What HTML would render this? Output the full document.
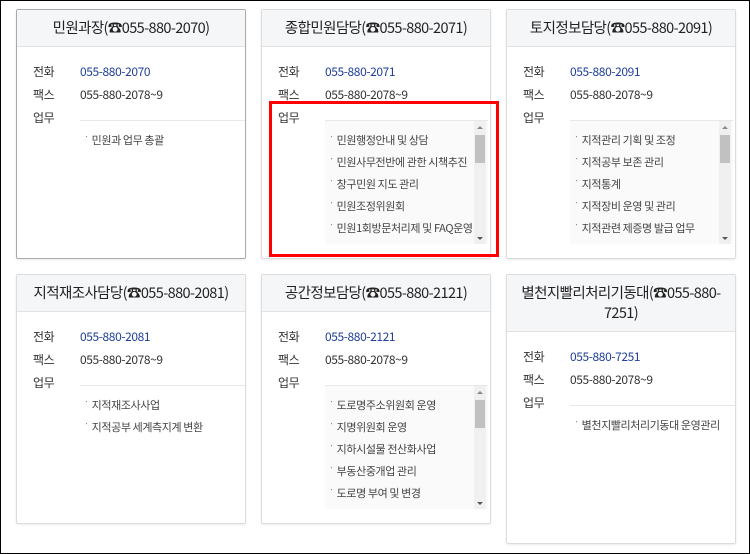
<!DOCTYPE html>
<html><head><meta charset="utf-8"><style>
*{margin:0;padding:0;box-sizing:border-box}
body{width:750px;height:554px;background:#fff;border:1px solid #000;position:relative;overflow:hidden;font-family:"Noto Sans CJK KR","Liberation Sans",sans-serif;color:#333}
.card{position:absolute;width:230px;height:250px;border:1px solid #dcdcdc;border-radius:2px;background:#fff;box-shadow:0 1px 2px rgba(0,0,0,.08)}
.card.sel{border-color:#aaa}
.hd{background:#f5f6f8;border-bottom:1px solid #e2e2e2;height:37px;display:flex;align-items:center;justify-content:center;text-align:center;font-size:14.5px;letter-spacing:-0.6px;color:#222;line-height:20px;white-space:nowrap}
.hd.two{height:57px}
.row{position:absolute;left:16px;font-size:12px;letter-spacing:-0.4px;height:23px;line-height:23px}
.row .l{display:inline-block;width:47px}
.blue{color:#1f3f99}
.list{position:absolute;left:63px;right:0;border-top:1px solid #e8e8e8;font-size:11px;letter-spacing:-0.4px;color:#444;padding-top:8px;white-space:nowrap}
.list div{height:22px;line-height:22px;padding-left:4px}
.list div:before{content:"·";font-size:9px;color:#888;margin-right:3px;vertical-align:top;position:relative;top:-3px}
.scroll{height:124px;overflow:hidden;background:#fafafa;right:2px}
.sb{position:absolute;right:2px;top:0;width:12px;height:124px;background:#f0f0f0}
.sb .t{position:absolute;left:1px;top:14px;width:10px;height:28px;background:#c1c1c1}
.sb .u,.sb .d{position:absolute;left:3px;width:0;height:0;border-left:3px solid transparent;border-right:3px solid transparent}
.sb .u{top:5px;border-bottom:3px solid #888}
.sb .d{bottom:5px;border-top:3px solid #555}
.red{position:absolute;left:268px;top:100px;width:230px;height:156px;border:3px solid #f00}
</style></head><body>

<div class="card sel" style="left:15px;top:8px">
<div class="hd">민원과장(☎055-880-2070)</div>
<div class="row" style="top:50px"><span class="l">전화</span><span class="blue">055-880-2070</span></div>
<div class="row" style="top:73px"><span class="l">팩스</span>055-880-2078~9</div>
<div class="row" style="top:96px"><span class="l">업무</span></div>
<div class="list" style="top:110px"><div>민원과 업무 총괄</div></div>
</div>

<div class="card" style="left:260px;top:8px">
<div class="hd">종합민원담당(☎055-880-2071)</div>
<div class="row" style="top:50px"><span class="l">전화</span><span class="blue">055-880-2071</span></div>
<div class="row" style="top:73px"><span class="l">팩스</span>055-880-2078~9</div>
<div class="row" style="top:96px"><span class="l">업무</span></div>
<div class="list scroll" style="top:110px"><div>민원행정안내 및 상담</div><div>민원사무전반에 관한 시책추진</div><div>창구민원 지도 관리</div><div>민원조정위원회</div><div>민원1회방문처리제 및 FAQ운영</div><div>민원서식</div><span class="sb"><span class="u"></span><span class="t"></span><span class="d"></span></span></div>
</div>

<div class="card" style="left:505px;top:8px">
<div class="hd">토지정보담당(☎055-880-2091)</div>
<div class="row" style="top:50px"><span class="l">전화</span><span class="blue">055-880-2091</span></div>
<div class="row" style="top:73px"><span class="l">팩스</span>055-880-2078~9</div>
<div class="row" style="top:96px"><span class="l">업무</span></div>
<div class="list scroll" style="top:110px"><div>지적관리 기획 및 조정</div><div>지적공부 보존 관리</div><div>지적통계</div><div>지적장비 운영 및 관리</div><div>지적관련 제증명 발급 업무</div><div>토지이동</div><span class="sb"><span class="u"></span><span class="t"></span><span class="d"></span></span></div>
</div>

<div class="card" style="left:15px;top:273px">
<div class="hd">지적재조사담당(☎055-880-2081)</div>
<div class="row" style="top:50px"><span class="l">전화</span><span class="blue">055-880-2081</span></div>
<div class="row" style="top:73px"><span class="l">팩스</span>055-880-2078~9</div>
<div class="row" style="top:96px"><span class="l">업무</span></div>
<div class="list" style="top:110px"><div>지적재조사사업</div><div>지적공부 세계측지계 변환</div></div>
</div>

<div class="card" style="left:260px;top:273px">
<div class="hd">공간정보담당(☎055-880-2121)</div>
<div class="row" style="top:50px"><span class="l">전화</span><span class="blue">055-880-2121</span></div>
<div class="row" style="top:73px"><span class="l">팩스</span>055-880-2078~9</div>
<div class="row" style="top:96px"><span class="l">업무</span></div>
<div class="list scroll" style="top:110px"><div>도로명주소위원회 운영</div><div>지명위원회 운영</div><div>지하시설물 전산화사업</div><div>부동산중개업 관리</div><div>도로명 부여 및 변경</div><div>건물번호 부여</div><span class="sb"><span class="u"></span><span class="t"></span><span class="d"></span></span></div>
</div>

<div class="card" style="left:505px;top:273px;height:270px">
<div class="hd two">별천지빨리처리기동대(☎055-880-<br>7251)</div>
<div class="row" style="top:70px"><span class="l">전화</span><span class="blue">055-880-7251</span></div>
<div class="row" style="top:93px"><span class="l">팩스</span>055-880-2078~9</div>
<div class="row" style="top:116px"><span class="l">업무</span></div>
<div class="list" style="top:130px"><div>별천지빨리처리기동대 운영관리</div></div>
</div>

<div class="red"></div>
</body></html>
